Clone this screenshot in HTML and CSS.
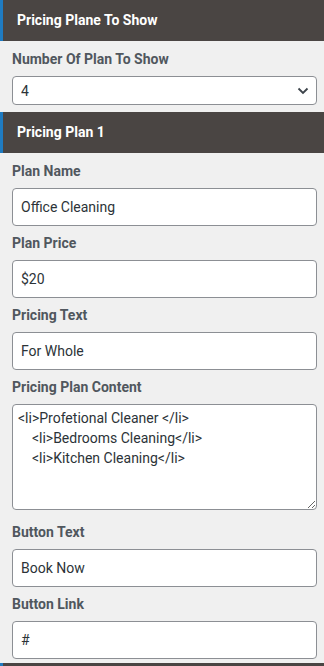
FILE: index.html
```html
<!DOCTYPE html>
<html lang="en">
<head>
    <meta charset="UTF-8">
    <meta name="viewport" content="width=device-width, initial-scale=1.0">
    <title>Pricing Plans</title>
    <link rel="stylesheet" href="styles.css">
</head>
<body>
    <div class="section-title">Pricing Plane To Show</div>
    <div class="panel">
        <div class="field">
            <label for="planCount">Number Of Plan To Show</label>
            <div class="select-wrap">
                <select id="planCount" class="form-control select">
                    <option>1</option>
                    <option>2</option>
                    <option>3</option>
                    <option selected>4</option>
                </select>
                <svg class="chevron" width="12" height="8" viewBox="0 0 12 8"><path d="M1.5 1.5 6 6l4.5-4.5" fill="none" stroke="#3c434a" stroke-width="1.8"/></svg>
            </div>
        </div>
    </div>

    <div class="section-title">Pricing Plan 1</div>
    <div class="panel panel-plan">
        <div class="field">
            <label for="planName">Plan Name</label>
            <input type="text" id="planName" class="form-control" value="Office Cleaning">
        </div>
        <div class="field">
            <label for="planPrice">Plan Price</label>
            <input type="text" id="planPrice" class="form-control" value="$20">
        </div>
        <div class="field">
            <label for="pricingText">Pricing Text</label>
            <input type="text" id="pricingText" class="form-control" value="For Whole">
        </div>
        <div class="field field-tall">
            <label for="planContent">Pricing Plan Content</label>
            <textarea id="planContent" class="form-control textarea">&lt;li&gt;Profetional Cleaner &lt;/li&gt;
    &lt;li&gt;Bedrooms Cleaning&lt;/li&gt;
    &lt;li&gt;Kitchen Cleaning&lt;/li&gt;</textarea>
        </div>
        <div class="field">
            <label for="buttonText">Button Text</label>
            <input type="text" id="buttonText" class="form-control" value="Book Now">
        </div>
        <div class="field">
            <label for="buttonLink">Button Link</label>
            <input type="text" id="buttonLink" class="form-control" value="#">
        </div>
    </div>

    <!-- next plan header, only its top edge is in view -->
    <div class="section-title section-peek"></div>
</body>
</html>
```

FILE: styles.css
```css
/* Pricing plan settings panel */
body {
    margin: 0;
    font-family: Roboto, "Liberation Sans", sans-serif;
    font-size: 14px;
    background-color: #f0f0f0;
    color: #3c434a;
}

.section-title {
    height: 41px;
    line-height: 41px;
    padding-left: 14px;
    border-left: 3px solid #1f7bc1;
    background-color: #4a4543;
    color: #fff;
    font-weight: bold;
    font-size: 14px;
}

.section-peek {
    height: 3px;
}

.panel {
    padding: 8px 7px 0 12px;
    background-color: #f0f0f0;
}

.field {
    margin-bottom: 7px;
}

.field-tall {
    margin-bottom: 12px;
}

.panel-plan .field:last-child {
    margin-bottom: 4px;
}

.field label {
    display: block;
    line-height: 20px;
    margin-bottom: 7px;
    font-weight: bold;
    color: #50575e;
}

.form-control {
    display: block;
    width: 100%;
    height: 38px;
    padding: 0 8px;
    border: 1px solid #8c8f94;
    border-radius: 4px;
    background-color: #fff;
    font-family: inherit;
    font-size: 14px;
    color: #2c3338;
    box-sizing: border-box;
}

.select-wrap {
    position: relative;
}

.select {
    height: 29px;
    appearance: none;
    -webkit-appearance: none;
}

.chevron {
    position: absolute;
    right: 8px;
    top: 11px;
    pointer-events: none;
}

.textarea {
    height: 106px;
    padding: 3px 5px;
    line-height: 20px;
    resize: vertical;
}
```
